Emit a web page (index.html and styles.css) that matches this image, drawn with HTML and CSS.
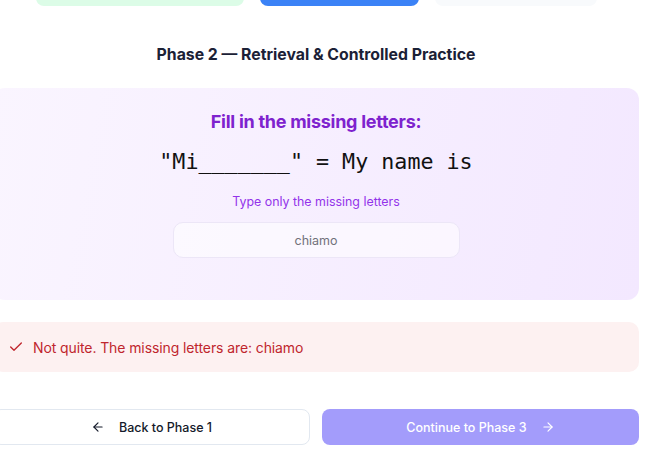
FILE: index.html
```html
<!DOCTYPE html>
<html lang="en">
<head>
<meta charset="utf-8">
<link rel="stylesheet" href="styles.css">
</head>
<body>
<div class="page">
  <div class="tabs">
    <div class="tab tab-done"></div>
    <div class="tab tab-active"></div>
    <div class="tab tab-next"></div>
  </div>
  <h2 class="phase-title">Phase 2 — Retrieval &amp; Controlled Practice</h2>
  <section class="card">
    <h3 class="card-title">Fill in the missing letters:</h3>
    <div class="prompt">"Mi_______" = My name is</div>
    <p class="hint">Type only the missing letters</p>
    <div class="answer">chiamo</div>
  </section>
  <div class="feedback">
    <svg class="fb-icon" width="16" height="16" viewBox="0 0 24 24" fill="none" stroke="currentColor" stroke-width="2" stroke-linecap="round" stroke-linejoin="round"><path d="M20 6 9 17l-5-5"/></svg>
    <span>Not quite. The missing letters are: chiamo</span>
  </div>
  <div class="actions">
    <button class="btn btn-back">
      <svg width="14" height="14" viewBox="0 0 24 24" fill="none" stroke="currentColor" stroke-width="2" stroke-linecap="round" stroke-linejoin="round"><path d="M19 12H5"/><path d="m12 19-7-7 7-7"/></svg>
      <span>Back to Phase 1</span>
    </button>
    <button class="btn btn-next">
      <span>Continue to Phase 3</span>
      <svg width="14" height="14" viewBox="0 0 24 24" fill="none" stroke="currentColor" stroke-width="2" stroke-linecap="round" stroke-linejoin="round"><path d="M5 12h14"/><path d="m12 5 7 7-7 7"/></svg>
    </button>
  </div>
</div>
</body>
</html>
```
FILE: styles.css
```css
* { box-sizing: border-box; }
html, body { margin: 0; padding: 0; background: #ffffff; overflow: hidden; }
body { font-family: Inter, "Noto Sans", sans-serif; color: #1e2235; }

.page {
  width: 646px;
  margin-left: -7px;
  margin-top: -30px;
}

.tabs {
  display: flex;
  justify-content: center;
  gap: 16px;
  height: 36px;
}
.tab { border-radius: 8px; height: 36px; }
.tab-done { width: 208px; background: #dcfce7; }
.tab-active { width: 159px; background: #3b82f6; }
.tab-next { width: 162px; background: #f8fafc; }

.phase-title {
  margin: 39px 0 0;
  text-align: center;
  font-size: 15.8px;
  line-height: 20px;
  font-weight: 700;
  color: #1b2136;
}

.card {
  margin-top: 23px;
  height: 212px;
  border-radius: 12px;
  background: linear-gradient(100deg, #faf5ff 0%, #f3e8ff 100%);
  padding: 23px 20px 0;
  display: flex;
  flex-direction: column;
  align-items: center;
}
.card-title {
  margin: 0;
  font-size: 18px;
  line-height: 22px;
  font-weight: 700;
  color: #7e22ce;
  letter-spacing: -0.27px;
}
.prompt {
  margin-top: 14px;
  font-family: "DejaVu Sans Mono", monospace;
  font-size: 21.7px;
  line-height: 30px;
  color: #111111;
}
.hint {
  margin: 17px 0 0;
  font-size: 12.4px;
  line-height: 16px;
  color: #9333ea;
}
.answer {
  margin-top: 12px;
  width: 287px;
  height: 36px;
  border: 1px solid #ece6f7;
  border-radius: 10px;
  background: rgba(255,255,255,0.55);
  display: flex;
  align-items: center;
  justify-content: center;
  font-size: 12.5px;
  color: #71717a;
}

.feedback {
  margin-top: 22px;
  height: 50px;
  border-radius: 10px;
  background: #fdf1f1;
  display: flex;
  align-items: center;
  gap: 9px;
  padding-left: 15px;
  color: #c0262d;
  font-size: 14px;
  letter-spacing: -0.1px;
}
.fb-icon { flex: none; }

.actions {
  margin-top: 37px;
  display: grid;
  grid-template-columns: 1fr 1fr;
  gap: 12px;
}
.btn {
  height: 36px;
  border-radius: 8px;
  display: flex;
  align-items: center;
  justify-content: center;
  gap: 14px;
  font-family: Inter, "Noto Sans", sans-serif;
  font-size: 12.5px;
  font-weight: 500;
  cursor: pointer;
}
.btn-back {
  background: #ffffff;
  border: 1px solid #e2e8f0;
  color: #141a2a;
}
.btn-next {
  background: #a39cfb;
  border: none;
  color: #ffffff;
}
```
